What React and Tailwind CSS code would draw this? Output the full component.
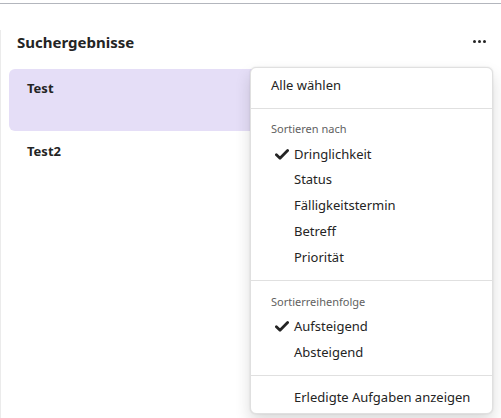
const SORT_BY = ["Dringlichkeit", "Status", "Fälligkeitstermin", "Betreff", "Priorität"];
const ORDER = ["Aufsteigend", "Absteigend"];

function Check() {
  return (
    <svg width="14" height="11" viewBox="0 0 14 11" className="text-[#242424]">
      <path d="M1.4 5.8 L5 9.2 L12.6 1.6" fill="none" stroke="currentColor" strokeWidth="2.8" strokeLinecap="round" strokeLinejoin="round" />
    </svg>
  );
}

function Item({ label, checked, inset = true }) {
  return (
    <div className={`flex h-[25.8px] items-center ${inset ? "pl-[24px]" : "pl-[20px]"}`}>
      {inset && <span className="flex w-[19px] items-center">{checked && <Check />}</span>}
      <span className="text-[13px] text-[#242424]">{label}</span>
    </div>
  );
}

function Divider() {
  return <div className="mt-[9.5px] mb-[9px] h-px bg-[#e0e0e0]" />;
}

function GroupHeader({ children }) {
  return <div className="flex h-[24px] items-center pl-[20px] text-[11px] text-[#616161]">{children}</div>;
}

export default function App() {
  return (
    <div className="relative h-[418px] w-[501px] overflow-hidden bg-white font-['Noto_Sans',sans-serif] text-[#242424]">
      <div className="mt-[3px] h-px bg-[#b3b6bd]" />
      <div className="h-[414px] border-l border-[#ebebeb]">
        {/* Header */}
        <div className="flex h-[24px] mt-[26px] items-center justify-between pl-[16px] pr-[15px]">
          <h2 className="text-[15px] font-bold">Suchergebnisse</h2>
          <div className="flex gap-[2px] -mt-[2px]">
            <span className="h-[3px] w-[3px] rounded-full bg-[#242424]" />
            <span className="h-[3px] w-[3px] rounded-full bg-[#242424]" />
            <span className="h-[3px] w-[3px] rounded-full bg-[#242424]" />
          </div>
        </div>

        {/* Results */}
        <div className="mt-[15px] flex flex-col px-[8px]">
          <div className="h-[62px] rounded-[6px] bg-[#e5def7] px-[18px] pt-[10px]">
            <div className="text-[13px] font-bold leading-[18px]">Test</div>
          </div>
          <div className="h-[62px] px-[18px] pt-[11px]">
            <div className="text-[13px] font-bold leading-[18px]">Test2</div>
          </div>
        </div>
      </div>

      {/* Context menu */}
      <div className="absolute left-[250px] top-[67px] w-[243px] rounded-[6px] border border-[#e0e0e0] bg-white pt-[6px] pb-[2px] shadow-[0_0_2px_rgba(0,0,0,0.12),0_8px_16px_rgba(0,0,0,0.14)]">
        <div className="flex h-[24px] items-center pl-[20px] text-[13px]">Alle wählen</div>
        <Divider />
        <GroupHeader>Sortieren nach</GroupHeader>
        {SORT_BY.map((s, i) => (
          <Item key={s} label={s} checked={i === 0} />
        ))}
        <Divider />
        <GroupHeader>Sortierreihenfolge</GroupHeader>
        {ORDER.map((s, i) => (
          <Item key={s} label={s} checked={i === 0} />
        ))}
        <Divider />
        <Item label="Erledigte Aufgaben anzeigen" />
      </div>
    </div>
  );
}
